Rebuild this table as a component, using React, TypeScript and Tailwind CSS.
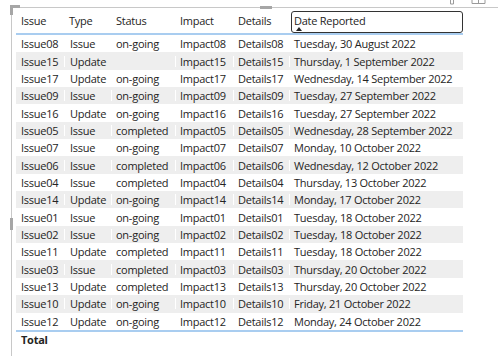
import React from 'react';

type Row = {
    issue: string;
    type: string;
    status: string;
    impact: string;
    details: string;
    date: string;
};

const ROWS: Row[] = [
    { issue: 'Issue08', type: 'Issue', status: 'on-going', impact: 'Impact08', details: 'Details08', date: 'Tuesday, 30 August 2022' },
    { issue: 'Issue15', type: 'Update', status: '', impact: 'Impact15', details: 'Details15', date: 'Thursday, 1 September 2022' },
    { issue: 'Issue17', type: 'Update', status: 'on-going', impact: 'Impact17', details: 'Details17', date: 'Wednesday, 14 September 2022' },
    { issue: 'Issue09', type: 'Issue', status: 'on-going', impact: 'Impact09', details: 'Details09', date: 'Tuesday, 27 September 2022' },
    { issue: 'Issue16', type: 'Update', status: 'on-going', impact: 'Impact16', details: 'Details16', date: 'Tuesday, 27 September 2022' },
    { issue: 'Issue05', type: 'Issue', status: 'completed', impact: 'Impact05', details: 'Details05', date: 'Wednesday, 28 September 2022' },
    { issue: 'Issue07', type: 'Issue', status: 'on-going', impact: 'Impact07', details: 'Details07', date: 'Monday, 10 October 2022' },
    { issue: 'Issue06', type: 'Issue', status: 'completed', impact: 'Impact06', details: 'Details06', date: 'Wednesday, 12 October 2022' },
    { issue: 'Issue04', type: 'Issue', status: 'completed', impact: 'Impact04', details: 'Details04', date: 'Thursday, 13 October 2022' },
    { issue: 'Issue14', type: 'Update', status: 'on-going', impact: 'Impact14', details: 'Details14', date: 'Monday, 17 October 2022' },
    { issue: 'Issue01', type: 'Issue', status: 'on-going', impact: 'Impact01', details: 'Details01', date: 'Tuesday, 18 October 2022' },
    { issue: 'Issue02', type: 'Issue', status: 'on-going', impact: 'Impact02', details: 'Details02', date: 'Tuesday, 18 October 2022' },
    { issue: 'Issue11', type: 'Update', status: 'completed', impact: 'Impact11', details: 'Details11', date: 'Tuesday, 18 October 2022' },
    { issue: 'Issue03', type: 'Issue', status: 'completed', impact: 'Impact03', details: 'Details03', date: 'Thursday, 20 October 2022' },
    { issue: 'Issue13', type: 'Update', status: 'completed', impact: 'Impact13', details: 'Details13', date: 'Thursday, 20 October 2022' },
    { issue: 'Issue10', type: 'Update', status: 'on-going', impact: 'Impact10', details: 'Details10', date: 'Friday, 21 October 2022' },
    { issue: 'Issue12', type: 'Update', status: 'on-going', impact: 'Impact12', details: 'Details12', date: 'Monday, 24 October 2022' },
];

// column widths in px: Issue, Type, Status, Impact, Details, Date Reported
const GRID = 'grid grid-cols-[48px_47px_64px_58px_56px_174px]';

export default function App() {
    return (
        <div
            className="relative w-[498px] h-[356px] bg-white text-[#252423] overflow-hidden"
            style={{ fontFamily: '"Segoe UI", "Open Sans", "Noto Sans", sans-serif' }}
        >
            {/* Visual chrome: frame, corner, resize handles, header icons */}
            <div className="absolute left-[11px] top-[7px] right-0 h-px bg-[#c8c8c8]" />
            <div className="absolute left-[11px] top-[7px] bottom-0 w-px bg-[#c8c8c8]" />
            <div className="absolute left-[10px] top-[5px] w-[10px] h-[3px] bg-[#a6a6a6]" />
            <div className="absolute left-[10px] top-[5px] w-[3px] h-[10px] bg-[#a6a6a6]" />
            <div className="absolute left-[260px] top-[6px] w-[12px] h-[3px] bg-[#a6a6a6]" />
            <div className="absolute left-[10px] top-[218px] w-[3px] h-[12px] bg-[#a6a6a6]" />
            <svg className="absolute left-[448px] top-0" width="8" height="5" viewBox="0 0 8 5">
                <path d="M2.5 0V4H5.5V0" fill="none" stroke="#9a9a9a" strokeWidth="1" />
            </svg>
            <svg className="absolute left-[471px] top-0" width="15" height="5" viewBox="0 0 15 5">
                <path d="M1 0V3.5H14V0M7.5 0V3.5" fill="none" stroke="#9a9a9a" strokeWidth="1" />
            </svg>

            {/* Table */}
            <div className="absolute left-[16px] top-[8px] w-[447px] text-[11px] tracking-[-0.25px] leading-none">
                <div className={`${GRID} h-[27px] items-center border-b-2 border-[#a9cdf0]`}>
                    <div className="pl-[5px]">Issue</div>
                    <div className="pl-[5px]">Type</div>
                    <div className="pl-[5px]">Status</div>
                    <div className="pl-[5px]">Impact</div>
                    <div className="pl-[5px]">Details</div>
                    <div className="relative h-[22px] ml-[2px] mt-[3px] border border-[#333333] rounded-[3px] pl-[2px] flex items-start pt-[3px]">
                        Date Reported
                        <svg className="absolute left-[4px] top-[15px]" width="6" height="4" viewBox="0 0 6 4">
                            <path d="M0 4L3 0L6 4Z" fill="#252423" />
                        </svg>
                    </div>
                </div>
                {ROWS.map((r, i) => (
                    <div
                        key={r.issue}
                        className={`${GRID} h-[17.35px] items-center ${i % 2 === 1 ? 'bg-[#eeeeee]' : 'bg-white'}`}
                    >
                        <div className="pl-[5px] whitespace-nowrap">{r.issue}</div>
                        <div className="pl-[5px] border-l border-white whitespace-nowrap">{r.type}</div>
                        <div className="pl-[4px] border-l border-white whitespace-nowrap">{r.status}</div>
                        <div className="pl-[4px] border-l border-white whitespace-nowrap">{r.impact}</div>
                        <div className="pl-[4px] border-l border-white whitespace-nowrap">{r.details}</div>
                        <div className="pl-[4px] border-l border-white whitespace-nowrap">{r.date}</div>
                    </div>
                ))}
                <div className="border-t-2 border-[#a9cdf0] h-[18px] flex items-center pl-[5px] font-bold">
                    Total
                </div>
            </div>
        </div>
    );
}
